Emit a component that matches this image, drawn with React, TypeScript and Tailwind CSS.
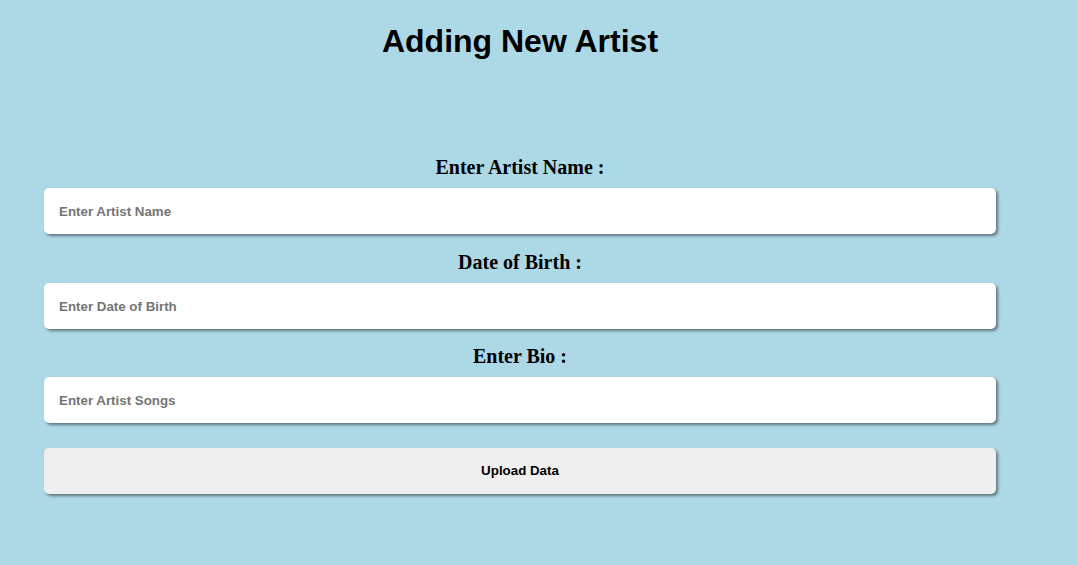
export default function App() {
  const fields = [
    { label: 'Enter Artist Name :', placeholder: 'Enter Artist Name' },
    { label: 'Date of Birth :', placeholder: 'Enter Date of Birth' },
    { label: 'Enter Bio :', placeholder: 'Enter Artist Songs' },
  ];

  return (
    <div className="min-h-screen bg-[#add8e6] pb-10">
      <div className="ml-[44px] w-[952px] flex flex-col">
        <h1 className="mt-[23px] text-center text-[32px] leading-[37px] font-bold text-black font-['Liberation_Sans',Arial,sans-serif]">
          Adding New Artist
        </h1>

        <form className="mt-[96px] flex flex-col" onSubmit={(e) => e.preventDefault()}>
          {fields.map((f, i) => (
            <div key={f.label} className="flex flex-col">
              <label className="h-[23px] text-center text-[20px] leading-[23px] font-bold text-black font-['Liberation_Serif','Times_New_Roman',serif]">
                {f.label}
              </label>
              <input
                type="text"
                placeholder={f.placeholder}
                className={
                  (i === 0 ? 'mb-[17px] ' : 'mb-[16px] ') +
                  'mt-[9px] h-[46px] w-full rounded-[5px] bg-white px-[15px] text-[13.33px] font-bold text-black outline-none shadow-[2px_2px_3px_rgba(0,0,0,0.45)] placeholder:text-[#757575] font-[\'Liberation_Sans\',Arial,sans-serif]'
                }
              />
            </div>
          ))}

          <button
            type="submit"
            className="mt-[9px] h-[46px] w-full rounded-[5px] bg-[#efefef] text-[13.33px] font-bold text-black shadow-[2px_2px_3px_rgba(0,0,0,0.45)] font-['Liberation_Sans',Arial,sans-serif]"
          >
            Upload Data
          </button>
        </form>
      </div>
    </div>
  );
}
